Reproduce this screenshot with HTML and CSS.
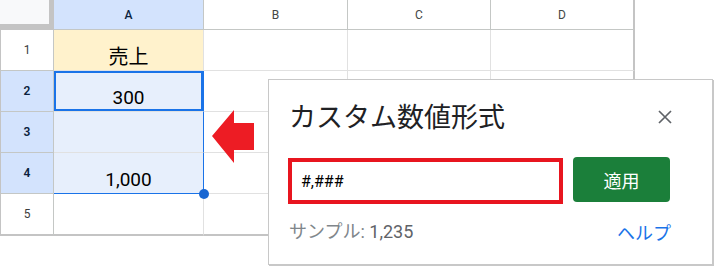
FILE: index.html
```html
<!DOCTYPE html>
<html lang="ja">
<head>
<meta charset="utf-8">
<title>カスタム数値形式</title>
<link rel="stylesheet" href="styles.css">
</head>
<body>
<div class="stage">
  <div class="sheet">
    <div class="corner"><div class="corner-inner"></div></div>
    <div class="colhead sel">A</div>
    <div class="colhead">B</div>
    <div class="colhead">C</div>
    <div class="colhead last">D</div>

    <div class="rowhead">1</div>
    <div class="cell yellow">売上</div>
    <div class="cell"></div>
    <div class="cell"></div>
    <div class="cell last"></div>

    <div class="rowhead sel">2</div>
    <div class="cell range active num">300</div>
    <div class="cell"></div>
    <div class="cell"></div>
    <div class="cell last"></div>

    <div class="rowhead sel">3</div>
    <div class="cell range"></div>
    <div class="cell"></div>
    <div class="cell"></div>
    <div class="cell last"></div>

    <div class="rowhead sel">4</div>
    <div class="cell range rangeend num">1,000<span class="handle"></span></div>
    <div class="cell"></div>
    <div class="cell"></div>
    <div class="cell last"></div>

    <div class="rowhead bottom">5</div>
    <div class="cell bottom"></div>
    <div class="cell bottom"></div>
    <div class="cell bottom"></div>
    <div class="cell bottom last"></div>
  </div>

  <svg class="arrow" width="46" height="57" viewBox="0 0 46 57">
    <polygon points="2,28 24,2 24,15 44,15 44,42 24,42 24,55" fill="#ed1c24"/>
  </svg>

  <div class="dialog">
    <div class="title-row">
      <div class="title">カスタム数値形式</div>
      <svg class="close" width="14" height="14" viewBox="0 0 14 14">
        <path d="M1 1 L13 13 M13 1 L1 13" stroke="#5f6368" stroke-width="1.7" fill="none"/>
      </svg>
    </div>
    <div class="input-row">
      <div class="field">#,###</div>
      <div class="apply">適用</div>
    </div>
    <div class="sample-row">
      <div class="sample"><span class="sample-label">サンプル:</span> <span class="sample-value">1,235</span></div>
      <div class="help">ヘルプ</div>
    </div>
  </div>
</div>
</body>
</html>
```
FILE: styles.css
```css
html, body {
  margin: 0;
  padding: 0;
  background: #ffffff;
}

.stage {
  position: relative;
  width: 715px;
  height: 266px;
  overflow: hidden;
  font-family: Roboto, "Noto Sans CJK JP", sans-serif;
}

.sheet {
  display: grid;
  grid-template-columns: 54px 150px 144px 143px 144px;
  grid-template-rows: 30px 41px 41px 41px 41px 42px;
  width: 635px;
}

.sheet > div {
  box-sizing: border-box;
  border-right: 1px solid #e1e1e1;
  border-bottom: 1px solid #e1e1e1;
}

.corner {
  background: #c4c4c4;
  border: none !important;
}
.corner-inner {
  width: 49px;
  height: 24px;
  background: #f8f9fa;
}

.colhead {
  display: flex;
  align-items: center;
  justify-content: center;
  font-size: 12px;
  color: #444746;
  background: #ffffff;
  border-right-color: #c4c7c5 !important;
  border-bottom-color: #c4c7c5 !important;
  padding-top: 1px;
}
.colhead.sel {
  background: #d3e3fd;
  color: #0b1f3f;
  font-weight: 500;
}
.colhead.last,
.cell.last {
  border-right: 2px solid #c4c4c4 !important;
}

.rowhead {
  display: flex;
  align-items: center;
  justify-content: center;
  font-size: 12px;
  color: #3c3c3c;
  background: #ffffff;
  border-left: 1px solid #c4c4c4;
  border-right-color: #c4c7c5 !important;
  border-bottom-color: #c4c7c5 !important;
}
.rowhead.sel {
  background: #d3e3fd;
  color: #0b1f3f;
  font-weight: 600;
}
.rowhead.bottom,
.cell.bottom {
  border-bottom: 2px solid #c4c4c4 !important;
}

.cell {
  position: relative;
  display: flex;
  align-items: flex-end;
  justify-content: center;
  font-size: 19px;
  line-height: 1;
  color: #000000;
  background: #ffffff;
}
.cell.yellow {
  background: #fff2cc;
  font-family: "Noto Sans CJK JP", sans-serif;
  font-size: 20px;
  padding-bottom: 4px;
}
.cell.num {
  padding-bottom: 4px;
}
.cell.range {
  background: #e7effc;
  border-right-color: #1a73e8;
}
.cell.active {
  box-shadow: inset 0 0 0 2px #1a73e8;
  border-right: 1px solid #1a73e8;
}
.cell.rangeend {
  border-bottom-color: #1a73e8;
}
.handle {
  position: absolute;
  z-index: 5;
  right: -6px;
  bottom: -6px;
  width: 10px;
  height: 10px;
  border-radius: 50%;
  background: #1967d2;
}

.arrow {
  position: absolute;
  left: 210px;
  top: 108px;
}

.dialog {
  position: absolute;
  z-index: 10;
  left: 268px;
  top: 79px;
  width: 445px;
  height: 186px;
  box-sizing: border-box;
  background: #ffffff;
  border: 1px solid #c8c8c8;
  box-shadow: 1px 1px 0 #c8c8c8;
  padding: 18px 41px 0 20px;
  display: flex;
  flex-direction: column;
}

.title-row {
  display: flex;
  justify-content: space-between;
  align-items: center;
  height: 36px;
}
.title {
  font-family: "Noto Sans CJK JP", sans-serif;
  font-size: 27px;
  line-height: 36px;
  color: #202124;
}
.close {
  margin-right: -1px;
  margin-top: 2px;
}

.input-row {
  display: flex;
  gap: 10px;
  align-items: flex-start;
  margin-top: 24px;
  margin-left: -1px;
}
.field {
  box-sizing: border-box;
  width: 275px;
  height: 46px;
  border: 4px solid #e8151f;
  padding-left: 9px;
  display: flex;
  align-items: center;
  font-family: Roboto, sans-serif;
  font-size: 16px;
  color: #000000;
}
.apply {
  box-sizing: border-box;
  width: 97px;
  height: 45px;
  margin-top: -1px;
  border-radius: 4px;
  background: #1b7f3a;
  color: #ffffff;
  display: flex;
  align-items: center;
  justify-content: center;
  font-family: "Noto Sans CJK JP", sans-serif;
  font-size: 18px;
}

.sample-row {
  display: flex;
  justify-content: space-between;
  align-items: center;
  margin-top: 16px;
  height: 24px;
  font-size: 18px;
  line-height: 24px;
}
.sample-label {
  color: #80868b;
}
.sample-value {
  color: #5f6368;
}
.help {
  color: #1a73e8;
  font-family: "Noto Sans CJK JP", sans-serif;
}
```
